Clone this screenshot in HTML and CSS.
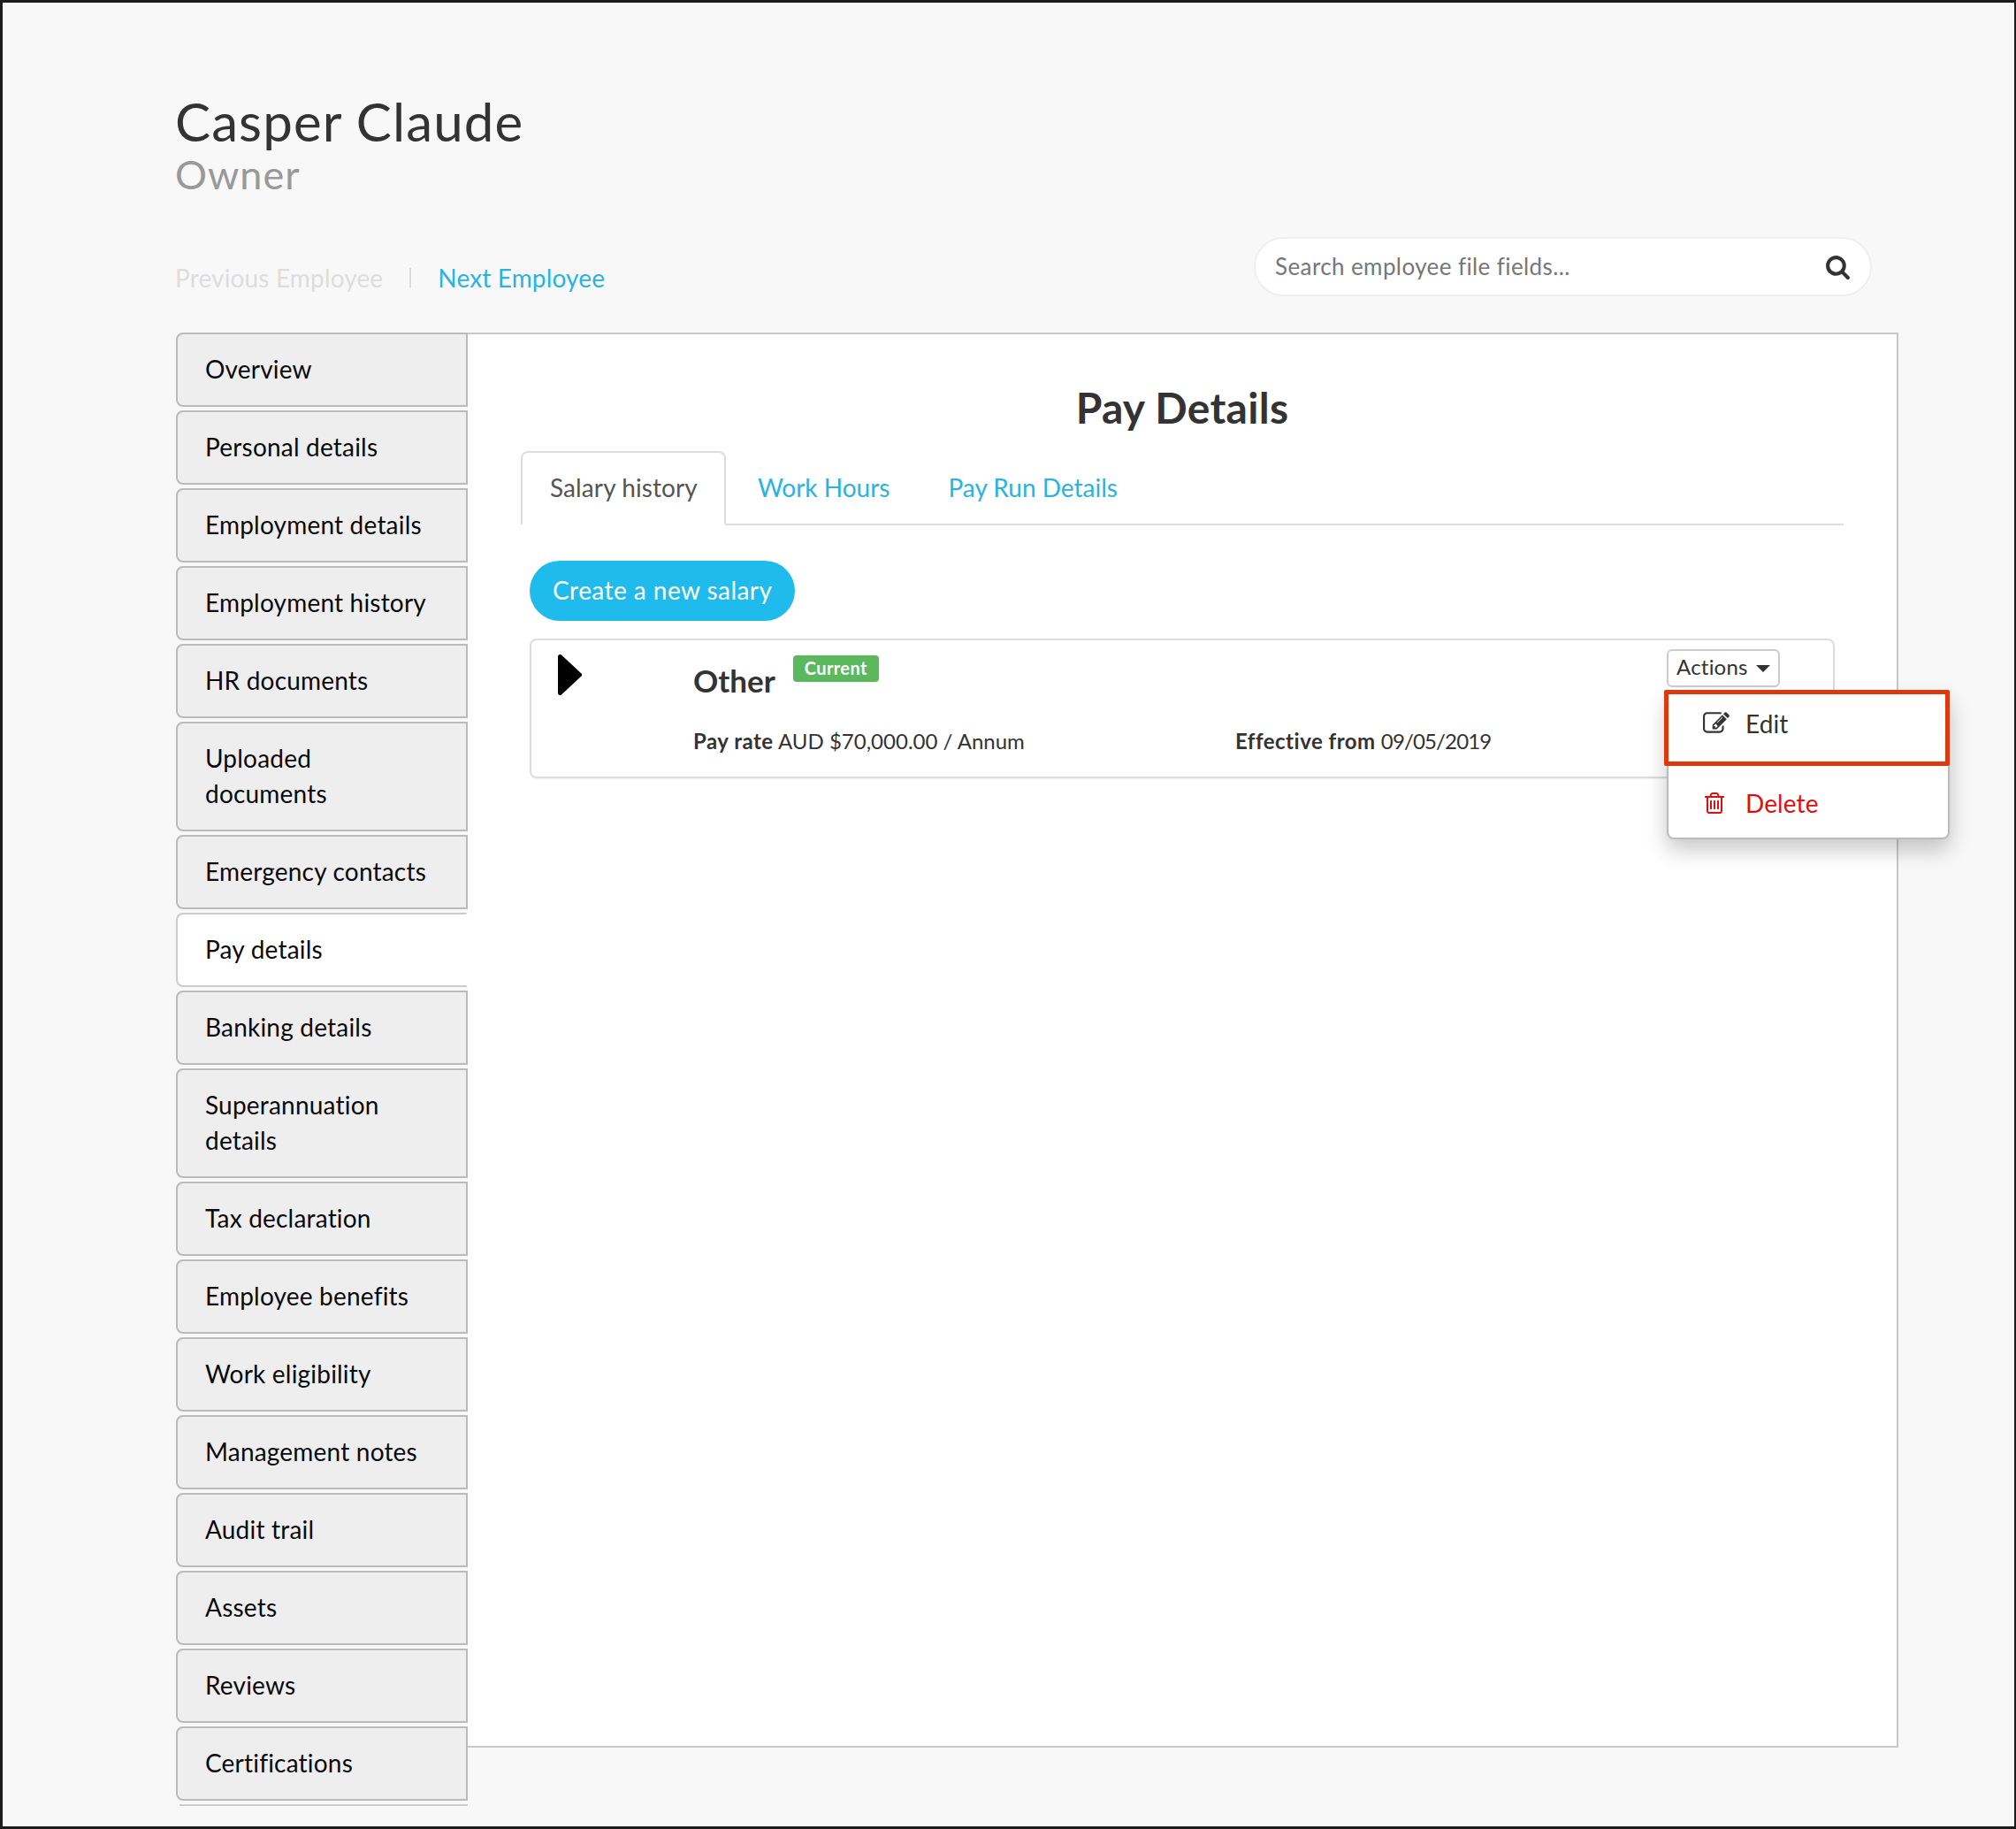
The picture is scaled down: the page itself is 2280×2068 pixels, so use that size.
FILE: index.html
```html
<!DOCTYPE html>
<html lang="en">
<head>
  <meta charset="utf-8">
  <meta name="viewport" content="width=device-width, initial-scale=1">
  <title>Casper Claude - Pay Details</title>
  <link rel="stylesheet" href="styles.css">
</head>
<body>

  <div class="page">
    <div class="head">
      <h1 class="head_name">Casper Claude</h1>
      <div class="head_role">Owner</div>
    </div>

    <div class="bar">
      <div class="bar_nav">
        <span class="bar_prev">Previous Employee</span>
        <span class="bar_sep"></span>
        <a href="#" class="bar_next">Next Employee</a>
      </div>
      <div class="search">
        <input class="search_input" type="text" placeholder="Search employee file fields...">
        <svg class="search_icon" viewBox="0 0 1792 1792"><path d="M1216 832q0-185-131.5-316.5t-316.5-131.5-316.5 131.5-131.5 316.5 131.5 316.5 316.5 131.5 316.5-131.5 131.5-316.5zm512 832q0 52-38 90t-90 38q-54 0-90-38l-343-342q-179 124-399 124-143 0-273.5-55.5t-225-150-150-225-55.5-273.5 55.5-273.5 150-225 225-150 273.5-55.5 273.5 55.5 225 150 150 225 55.5 273.5q0 220-124 399l343 343q37 37 37 90z"/></svg>
      </div>
    </div>

    <div class="main">
      <div class="side">
        <a href="#" class="side_item">Overview</a>
        <a href="#" class="side_item">Personal details</a>
        <a href="#" class="side_item">Employment details</a>
        <a href="#" class="side_item">Employment history</a>
        <a href="#" class="side_item">HR documents</a>
        <a href="#" class="side_item">Uploaded<br>documents</a>
        <a href="#" class="side_item">Emergency contacts</a>
        <a href="#" class="side_item side_item-active">Pay details</a>
        <a href="#" class="side_item">Banking details</a>
        <a href="#" class="side_item">Superannuation<br>details</a>
        <a href="#" class="side_item">Tax declaration</a>
        <a href="#" class="side_item">Employee benefits</a>
        <a href="#" class="side_item">Work eligibility</a>
        <a href="#" class="side_item">Management notes</a>
        <a href="#" class="side_item">Audit trail</a>
        <a href="#" class="side_item">Assets</a>
        <a href="#" class="side_item">Reviews</a>
        <a href="#" class="side_item">Certifications</a>
        <div class="side_end"></div>
      </div>

      <div class="panel">
        <h2 class="panel_title">Pay Details</h2>

        <div class="tabs">
          <a href="#" class="tabs_item tabs_item-active">Salary history</a>
          <a href="#" class="tabs_item">Work Hours</a>
          <a href="#" class="tabs_item">Pay Run Details</a>
        </div>

        <div class="content">
          <button class="create">Create a new salary</button>

          <div class="card">
            <svg class="card_arrow" viewBox="0 0 27 46"><polygon points="2.5,2.5 24.5,23 2.5,43.5"/></svg>
            <div class="card_body">
              <div class="card_top">
                <span class="card_name">Other</span>
                <span class="badge">Current</span>
              </div>
              <div class="card_info">
                <span class="card_rate"><b>Pay rate</b> AUD $70,000.00 / Annum</span>
                <span><b>Effective from</b> <span class="card_date">09/05/2019</span></span>
              </div>
            </div>

            <div class="actions">
              <button class="actions_btn">Actions <span class="caret"></span></button>
              <div class="menu">
                <div class="menu_mark"></div>
                <a href="#" class="menu_item">
                  <svg class="menu_icon" viewBox="0 0 1792 1792"><path d="M888 1184l116-116-152-152-116 116v56h96v96h56zm440-720q-16-16-33 1l-350 350q-17 17-1 33t33-1l350-350q17-17 1-33zm80 594v190q0 119-84.5 203.5t-203.5 84.5h-832q-119 0-203.5-84.5t-84.5-203.5v-832q0-119 84.5-203.5t203.5-84.5h832q63 0 117 25 15 7 18 23 3 17-9 29l-49 49q-14 14-32 8-23-6-45-6h-832q-66 0-113 47t-47 113v832q0 66 47 113t113 47h832q66 0 113-47t47-113v-126q0-13 9-22l64-64q15-15 35-7t20 29zm-96-738l288 288-672 672h-288v-288zm444 132l-92 92-288-288 92-92q28-28 68-28t68 28l152 152q28 28 28 68t-28 68z"/></svg>
                  Edit
                </a>
                <a href="#" class="menu_item menu_item-danger">
                  <svg class="menu_icon" viewBox="0 0 1792 1792"><path d="M704 736v576q0 14-9 23t-23 9h-64q-14 0-23-9t-9-23v-576q0-14 9-23t23-9h64q14 0 23 9t9 23zm256 0v576q0 14-9 23t-23 9h-64q-14 0-23-9t-9-23v-576q0-14 9-23t23-9h64q14 0 23 9t9 23zm256 0v576q0 14-9 23t-23 9h-64q-14 0-23-9t-9-23v-576q0-14 9-23t23-9h64q14 0 23 9t9 23zm128 724v-948h-896v948q0 22 7 40.5t14.5 27 10.5 8.5h832q3 0 10.5-8.5t14.5-27 7-40.5zm-672-1076h448l-48-117q-7-9-17-11h-317q-10 2-17 11zm928 32v64q0 14-9 23t-23 9h-96v948q0 83-47 143.5t-113 60.5h-832q-66 0-113-58.5t-47-141.5v-952h-96q-14 0-23-9t-9-23v-64q0-14 9-23t23-9h309l70-167q15-37 54-63t79-26h320q40 0 79 26t54 63l70 167h309q14 0 23 9t9 23z"/></svg>
                  Delete
                </a>
              </div>
            </div>
          </div>
        </div>
      </div>
    </div>
  </div>

</body>
</html>
```

FILE: styles.css
```css
html,
body {
  margin: 0;
  height: 100%;
}

body {
  font-family: "Lato", "Liberation Sans", sans-serif;
  color: #333;
  background: #f8f8f8;
}

a {
  text-decoration: none;
}

.page {
  box-sizing: border-box;
  height: 2068px;
  overflow: hidden;
  padding: 98px 131px 0 196px;
  border: solid #1c1c1c;
  border-width: 3px 2px 3px 3px;
}

/* header */
.head {
  margin-left: -1px;
}
.head_name {
  margin: 0;
  font-size: 60px;
  font-weight: 400;
  line-height: 72px;
  letter-spacing: 1.1px;
  color: #333;
}
.head_role {
  font-size: 45px;
  line-height: 48px;
  letter-spacing: 1px;
  color: #999;
}

.bar {
  display: flex;
  justify-content: space-between;
  align-items: flex-start;
  margin-top: 47px;
  padding-right: 30px;
}
.bar_nav {
  display: flex;
  align-items: center;
  margin: 26px 0 0 -1px;
  font-size: 28px;
  line-height: 40px;
  letter-spacing: 0.15px;
}
.bar_prev {
  color: #ddd;
}
.bar_sep {
  width: 2px;
  height: 22px;
  margin: 0 30px;
  background: #ddd;
}
.bar_next {
  color: #2bb3e0;
}

.search {
  display: flex;
  align-items: center;
  box-sizing: border-box;
  width: 699px;
  height: 67px;
  padding: 0 22px;
  background: #fff;
  border: 2px solid #eef0ef;
  border-radius: 34px;
}
.search_input {
  flex: 1;
  border: 0;
  outline: 0;
  padding: 0 0 2px;
  font-family: inherit;
  font-size: 26px;
  letter-spacing: 0.4px;
  color: #777;
  background: transparent;
}
.search_input::placeholder {
  color: #777;
  opacity: 1;
}
.search_icon {
  width: 29px;
  height: 29px;
  fill: #333;
}

.main {
  display: flex;
  align-items: flex-start;
  margin-top: 41px;
}

/* left column */
.side {
  display: flex;
  flex-direction: column;
  gap: 4px;
  flex: 0 0 330px;
}
.side_item {
  display: block;
  padding: 19px 30px 21px 31px;
  font-size: 28px;
  line-height: 40px;
  letter-spacing: 0.2px;
  color: #0a0a0a;
  background: #eee;
  border: 2px solid #bbb;
  border-radius: 8px 0 0 8px;
}
.side_item-active {
  background: #fff;
  border-color: #ccc;
  border-right-color: #fff;
}
.side_end {
  height: 0;
  margin-left: 4px;
  border-top: 2px solid #ccc;
}

/* right column */
.panel {
  flex: 1;
  box-sizing: border-box;
  height: 1600px;
  padding: 55px 60px 0;
  background: #fff;
  border: solid #c8c8c8;
  border-width: 2px 2px 2px 0;
}
.panel_title {
  margin: 0;
  font-size: 48px;
  font-weight: 700;
  line-height: 56px;
  letter-spacing: 0.3px;
  text-align: center;
  color: #333;
}

.tabs {
  display: flex;
  margin-top: 21px;
  height: 84px;
  box-sizing: border-box;
  border-bottom: 2px solid #ddd;
}
.tabs_item {
  box-sizing: border-box;
  height: 84px;
  padding: 0 31px;
  font-size: 28px;
  line-height: 78px;
  color: #2bb3e0;
  border: 2px solid transparent;
}
.tabs_item-active {
  padding: 0 30px 0 31px;
  margin-right: 3px;
  letter-spacing: 0.1px;
  color: #555;
  background: #fff;
  border-color: #ddd;
  border-bottom-color: #fff;
  border-radius: 8px 8px 0 0;
}

.content {
  padding: 40px 8px 0 10px;
  margin-right: 2px;
}

.create {
  display: block;
  height: 68px;
  padding: 0 26px 3px;
  font-family: inherit;
  font-size: 28px;
  letter-spacing: 0.45px;
  color: #fff;
  background: #1fbbec;
  border: 0;
  border-radius: 34px;
}

.card {
  position: relative;
  display: flex;
  box-sizing: border-box;
  height: 158px;
  margin-top: 20px;
  background: #fff;
  border: 2px solid #ddd;
  border-radius: 8px;
  box-shadow: 0 1px 2px rgba(0, 0, 0, 0.06);
}
.card_arrow {
  flex: none;
  width: 27px;
  height: 46px;
  margin: 16px 0 0 30px;
  fill: #000;
  stroke: #000;
  stroke-width: 5;
  stroke-linejoin: round;
}
.card_body {
  margin-left: 126px;
  padding-top: 21px;
}
.card_top {
  display: flex;
  align-items: flex-start;
  height: 76px;
}
.card_name {
  font-size: 35px;
  font-weight: 700;
  line-height: 48px;
  color: #333;
}
.badge {
  height: 30px;
  margin: -4px 0 0 20px;
  padding: 0 13px;
  font-size: 20px;
  font-weight: 700;
  line-height: 28px;
  letter-spacing: 0.4px;
  color: #fff;
  background: #5cb85c;
  border-radius: 4px;
}
.card_info {
  display: flex;
  font-size: 24px;
  line-height: 34px;
  color: #333;
}
.card_info b {
  letter-spacing: 0.5px;
}
.card_rate {
  width: 613px;
}
.card_date {
  letter-spacing: -0.85px;
}

.actions {
  position: absolute;
  top: 10px;
  left: 1284px;
}
.actions_btn {
  display: block;
  box-sizing: border-box;
  width: 128px;
  height: 43px;
  padding: 0 0 5px;
  font-family: inherit;
  font-size: 24px;
  letter-spacing: 0.2px;
  color: #333;
  background: #fff;
  border: 2px solid #ccc;
  border-radius: 6px;
}
.caret {
  display: inline-block;
  margin-left: 3px;
  vertical-align: middle;
  border: solid transparent;
  border-width: 8px 8px 0;
  border-top-color: #333;
}

.menu {
  position: absolute;
  top: 47px;
  left: 0;
  box-sizing: border-box;
  width: 320px;
  height: 168px;
  background: #fff;
  border: 2px solid #bbb;
  border-top: 0;
  border-radius: 0 0 8px 8px;
  box-shadow: 0 12px 24px rgba(0, 0, 0, 0.22);
}
.menu_mark {
  position: absolute;
  top: -1px;
  left: -5px;
  box-sizing: border-box;
  width: 323px;
  height: 86px;
  border: 5px solid #dc3a0e;
  border-radius: 2px;
}
.menu_item {
  display: flex;
  align-items: center;
  gap: 18px;
  box-sizing: border-box;
  height: 90px;
  padding: 0 0 16px 39px;
  font-size: 28px;
  line-height: 40px;
  letter-spacing: 0.1px;
  color: #333;
}
.menu_item-danger {
  color: #e00e0e;
}
.menu_item-danger .menu_icon {
  width: 28px;
  height: 28px;
  margin: 0 3px 0 -1px;
  fill: #e00e0e;
}
.menu_icon {
  width: 30px;
  height: 30px;
  fill: #333;
}
```
